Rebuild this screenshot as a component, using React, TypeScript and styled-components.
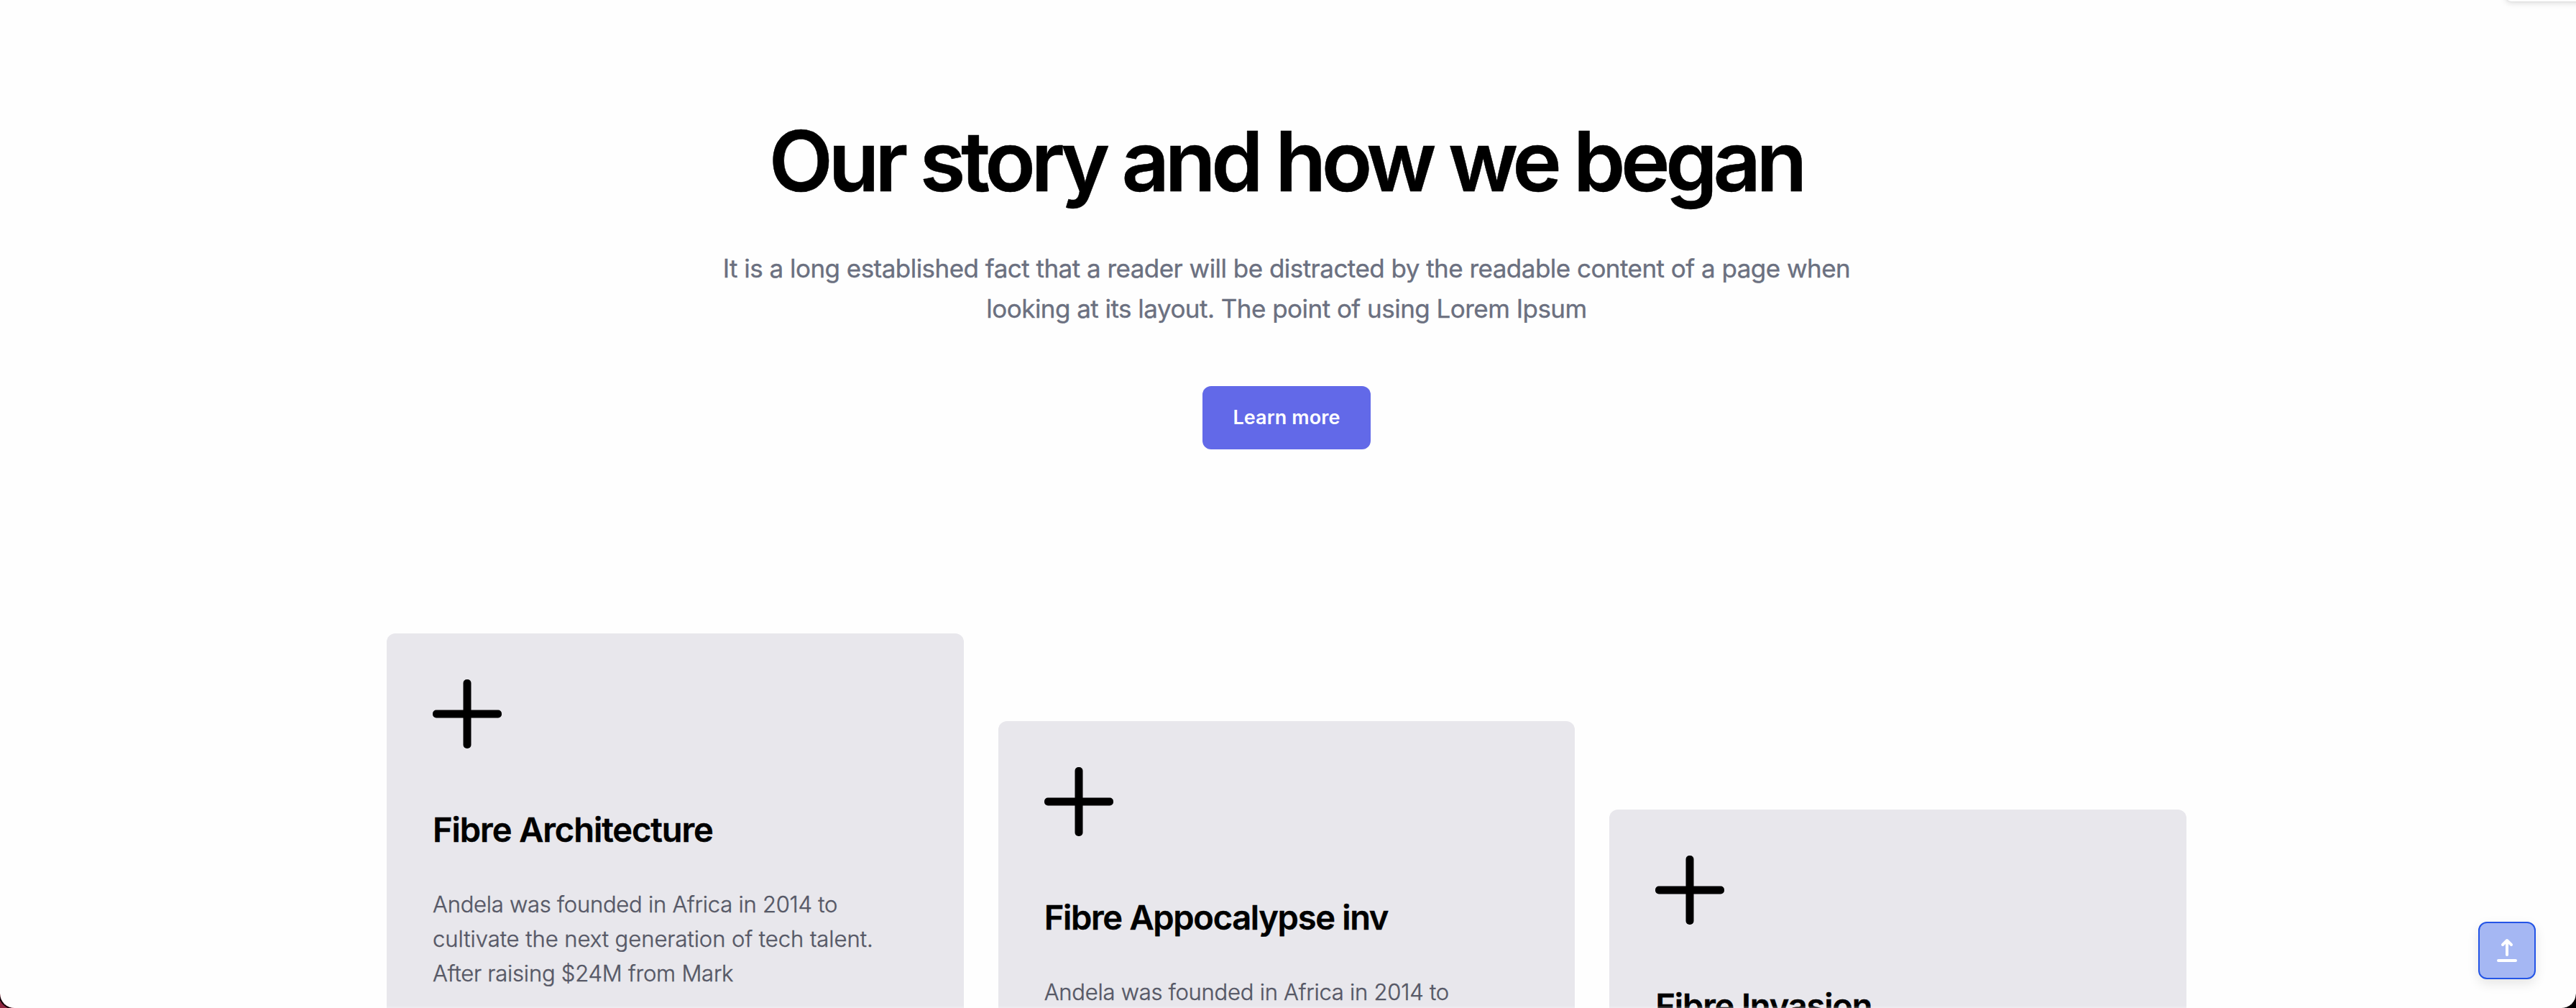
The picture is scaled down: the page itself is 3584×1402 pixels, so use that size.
import React from 'react';
import styled, { createGlobalStyle } from 'styled-components';

const GlobalStyle = createGlobalStyle`
  *, *::before, *::after { box-sizing: border-box; }
  body {
    margin: 0;
    background: linear-gradient(90deg, #8f2640 0 50%, #000 50%);
    font-family: Inter, "Liberation Sans", sans-serif;
  }
  h1, h2, p { margin: 0; }
`;

const Page = styled.main`
  position: relative;
  display: flex;
  flex-direction: column;
  align-items: center;
  height: 1402px;
  padding: 164px 4px 0 0;
  overflow: hidden;
  background: #fefefe;
  border-radius: 0 0 20px 20px;
`;

const Frame = styled.div`
  height: 1402px;
  overflow: hidden;
  border-radius: 0 0 20px 20px;
  box-shadow: 0 0 0 2px #0d0508;
`;

/* Thin highlight along the bottom of the window. */
const EdgeHighlight = styled.div`
  position: absolute;
  inset: auto 0 0 0;
  height: 2px;
  background: rgba(255, 255, 255, 0.22);
`;

const Hero = styled.header`
  display: flex;
  flex-direction: column;
  align-items: center;
  text-align: center;
`;

const Heading = styled.h1`
  color: #000;
  font-size: 116px;
  font-weight: 600;
  line-height: 120px;
  letter-spacing: -6.42px;
  white-space: nowrap;
  transform: translateX(-1px);
  -webkit-text-stroke: 0.5px #000;
`;

const Lead = styled.p`
  margin-top: 61px;
  color: #6b7080;
  font-size: 35px;
  font-weight: 400;
  line-height: 56px;
  letter-spacing: -0.53px;
  white-space: nowrap;
  -webkit-text-stroke: 0.35px #6b7080;
`;

const LearnMore = styled.button`
  width: 234px;
  height: 88px;
  margin-top: 80px;
  padding: 0;
  border: 0;
  border-radius: 12px;
  background: #6269e8;
  color: #fff;
  font: 600 27px/40px Inter, "Liberation Sans", sans-serif;
  letter-spacing: 0.1px;
`;

const Cards = styled.section`
  display: grid;
  grid-template-columns: repeat(3, 1fr);
  gap: 48px;
  width: 2504px;
  margin-top: 255.67px;
`;

const Card = styled.article<{ $drop: number }>`
  display: flex;
  flex-direction: column;
  height: 700px;
  margin-top: ${({ $drop }) => $drop}px;
  padding: 64px;
  border-radius: 12px;
  background: #e8e7ec;
`;

const PlusIcon = styled.svg`
  flex: none;
  width: 96px;
  height: 96px;
`;

const CardTitle = styled.h2<{ $tracking: number }>`
  margin-top: 85px;
  color: #000;
  font-size: 47px;
  font-weight: 600;
  line-height: 56px;
  letter-spacing: ${({ $tracking }) => $tracking}px;
  white-space: nowrap;
  -webkit-text-stroke: 0.4px #000;
`;

const CardText = styled.p`
  margin-top: 52px;
  color: #565866;
  font-size: 31px;
  font-weight: 300;
  line-height: 48px;
  -webkit-text-stroke: 0.4px #565866;
`;

const Line = styled.span<{ $tracking: number }>`
  display: block;
  letter-spacing: ${({ $tracking }) => $tracking}px;
  white-space: nowrap;
`;

const TopPanel = styled.div`
  position: absolute;
  top: -40px;
  right: -20px;
  width: 118px;
  height: 42px;
  border-radius: 8px;
  background: #fff;
  box-shadow: 0 0 2px rgba(0, 0, 0, 0.1), 0 2px 8px rgba(0, 0, 0, 0.15);
`;

const UploadButton = styled.button`
  position: absolute;
  right: 56px;
  bottom: 40px;
  display: grid;
  place-items: center;
  width: 80px;
  height: 80px;
  padding: 0;
  border: 2px solid #2455e6;
  border-radius: 12px;
  background: #a5b7f3;
  box-shadow: 0 6px 16px rgba(0, 0, 0, 0.1);

  svg {
    width: 48px;
    height: 48px;
  }
`;

const cards = [
  { title: 'Fibre Architecture', tracking: -1.06, drop: 0 },
  { title: 'Fibre Appocalypse inv', tracking: -1.3, drop: 122.67 },
  { title: 'Fibre Invasion', tracking: -1.15, drop: 245.33 },
];

export default function App() {
  return (
    <>
      <GlobalStyle />
      <Frame>
        <Page>
          <Hero>
            <Heading>Our story and how we began</Heading>
            <Lead>
              It is a long established fact that a reader will be distracted by the readable content of a page when
              <br />
              looking at its layout. The point of using Lorem Ipsum
            </Lead>
            <LearnMore>Learn more</LearnMore>
          </Hero>
          <Cards>
            {cards.map(({ title, tracking, drop }) => (
              <Card key={title} $drop={drop}>
                <PlusIcon viewBox="0 0 96 96" aria-hidden="true">
                  <rect x="42.5" y="0" width="11" height="96" rx="5" />
                  <rect x="0" y="42.5" width="96" height="11" rx="5" />
                </PlusIcon>
                <CardTitle $tracking={tracking}>{title}</CardTitle>
                <CardText>
                  <Line $tracking={-0.24}>Andela was founded in Africa in 2014 to</Line>
                  <Line $tracking={-0.03}>cultivate the next generation of tech talent.</Line>
                  <Line $tracking={-0.22}>After raising $24M from Mark</Line>
                </CardText>
              </Card>
            ))}
          </Cards>
          <TopPanel />
          <UploadButton aria-label="Upload">
            <svg viewBox="0 0 48 48" fill="none" stroke="#fff" strokeWidth="4" strokeLinecap="round" strokeLinejoin="round">
              <path d="M24 30V10M18 16L24 10L30 16M12 38H36" />
            </svg>
          </UploadButton>
          <EdgeHighlight />
        </Page>
      </Frame>
    </>
  );
}
